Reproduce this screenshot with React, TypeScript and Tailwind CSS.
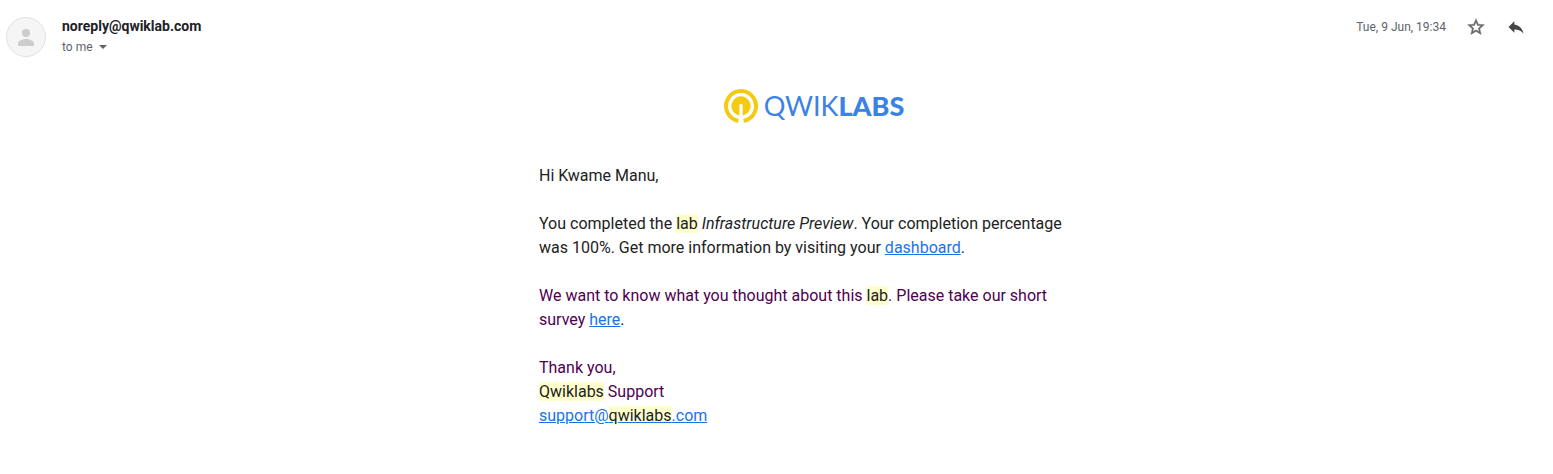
import type { ReactNode } from "react";

function Mark({ children }: { children: ReactNode }) {
  return <mark className="bg-[#ffffcc] text-[#222222]">{children}</mark>;
}

function TextLink({ href, children }: { href: string; children: ReactNode }) {
  return (
    <a href={href} className="text-[#1a73e8] underline">
      {children}
    </a>
  );
}

function Avatar() {
  return (
    <svg viewBox="0 0 40 40" className="size-10 shrink-0" role="img" aria-label="Sender avatar">
      <circle cx="20" cy="20" r="19.5" fill="#f5f5f5" stroke="#e0e0e0" />
      <circle cx="20" cy="16" r="4" fill="#cccccc" />
      <path d="M12 29v-2.5c0-3 5-4.5 8-4.5s8 1.5 8 4.5V29z" fill="#cccccc" />
    </svg>
  );
}

function Logo() {
  return (
    <div className="flex items-center gap-[6px]">
      <svg viewBox="0 0 34 34" className="size-[34px]" aria-hidden="true">
        <path d="M14.4 31.8A15 15 0 1 1 19.6 31.8" fill="none" stroke="#f4cb12" strokeWidth="4" />
        <path d="M15.4 26.400A9.600 9.600 0 1 1 18.600 26.400V16.400a1.600 1.600 0 0 0-3.200 0z" fill="#f4cb12" />
      </svg>
      <span className="font-[Lato,sans-serif] text-[27px] leading-8 text-[#3b82e6]">
        <span className="font-normal">QWIK</span>
        <span className="font-black">LABS</span>
      </span>
    </div>
  );
}

export default function App() {
  return (
    <main className="bg-white pb-8 font-[Roboto,sans-serif] text-[#222222]">
      <header className="flex items-start pt-[17px] pr-[27px] pl-[6px]">
        <Avatar />
        <div className="ml-4 flex-1">
          <h1 className="text-sm leading-[18px] font-bold text-[#202124]">noreply@qwiklab.com</h1>
          <button type="button" className="flex items-center gap-[6px] text-xs leading-6 text-[#5f6368]">
            to me
            <svg viewBox="0 0 8 4" className="h-1 w-2" aria-hidden="true">
              <path d="M0 0h8L4 4z" fill="#5f6368" />
            </svg>
          </button>
        </div>
        <div className="flex h-5 items-center gap-5">
          <time className="text-xs text-[#5f6368]">Tue, 9 Jun, 19:34</time>
          <button type="button" aria-label="Star">
            <svg viewBox="0 0 24 24" className="size-5" fill="#666666" stroke="#666666" strokeWidth="0.5">
              <path d="M22 9.24l-7.19-.62L12 2 9.19 8.63 2 9.24l5.46 4.73L5.82 21 12 17.27 18.18 21l-1.63-7.03L22 9.24zM12 15.4l-3.76 2.27 1-4.28-3.32-2.88 4.38-.38L12 6.1l1.71 4.04 4.38.38-3.32 2.88 1 4.28L12 15.4z" />
            </svg>
          </button>
          <button type="button" aria-label="Reply">
            <svg viewBox="0 0 24 24" className="size-5" fill="#444444">
              <path d="M10 9V5l-7 7 7 7v-4.100c5 0 8.500 1.600 11 5.100-1-5-4-10-11-11z" />
            </svg>
          </button>
        </div>
      </header>

      <div className="pt-[30px] pl-[75px]">
        <article className="mx-auto max-w-[550px] text-base leading-6">
          <div className="flex justify-center">
            <Logo />
          </div>
          <p className="mt-[41px]">Hi Kwame Manu,</p>
          <p className="mt-6">
            You completed the <Mark>lab</Mark> <em>Infrastructure Preview</em>. Your completion percentage was 100%. Get
            more information by visiting your <TextLink href="#dashboard">dashboard</TextLink>.
          </p>
          <p className="mt-6 text-[#500050]">
            We want to know what you thought about this <Mark>lab</Mark>. Please take our short survey{" "}
            <TextLink href="#survey">here</TextLink>.
          </p>
          <p className="mt-6 text-[#500050]">
            Thank you,
            <br />
            <Mark>Qwiklabs</Mark> Support
            <br />
            <TextLink href="mailto:support@qwiklabs.com">
              support@<Mark>qwiklabs</Mark>.com
            </TextLink>
          </p>
        </article>
      </div>
    </main>
  );
}
